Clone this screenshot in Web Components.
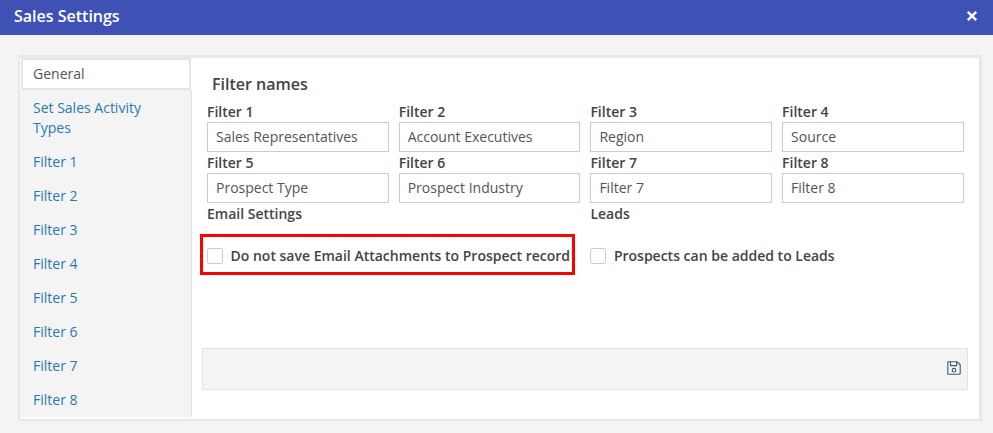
<!DOCTYPE html>
<html lang="en"><head><meta charset="utf-8"><title>Sales Settings</title>
<style>
html,body{margin:0;padding:0;background:#f4f4f4;height:100%;overflow:hidden}
body{font-family:"Open Sans",sans-serif;font-size:14px;color:#444}
</style></head><body>
<sales-dialog></sales-dialog>
<template id="t-dialog"><style>
:host{display:block;width:993px;height:433px;background:#f4f4f4}
header{height:35px;background:#3f51b5;color:#fff;display:flex;align-items:center;justify-content:space-between;padding:0 15px 0 14px;box-sizing:border-box}
h1{margin:0;font-size:16px;font-weight:600;line-height:35px;position:relative;top:-1px}
svg{display:block;position:relative;top:-2px}
.frame{margin:20px 11px 0 18px;height:366px;box-sizing:border-box;border:solid #e8e8e8;border-width:3px 3px 2px 2px;background:#fff;padding-bottom:2px;display:flex}
side-nav{flex:none}
settings-panel{flex:1;min-width:0}
</style>
<header><h1>Sales Settings</h1><svg width="12" height="12" viewBox="0 0 12 12" aria-label="Close"><path d="M1.8 1.8 10.2 10.2M10.2 1.8 1.8 10.2" stroke="#fff" stroke-width="2.4"/></svg></header>
<div class="frame"><side-nav></side-nav><settings-panel></settings-panel></div>
</template>

<template id="t-nav"><style>
:host{display:flex;flex-direction:column;width:172px;box-sizing:border-box}
.tab{color:#555;background:#fff;border:2px solid #e5e5e5;height:32px;box-sizing:border-box;padding:3px 0 0 10px;line-height:22px;margin-left:1px;width:170px;flex:none}
ul{list-style:none;margin:0;padding:1px 0 0;flex:1;background:#f4f4f4;border-right:1px solid #e3e3e3}
li{padding:7px 13px;line-height:20px;color:#2a7ab0}
</style>
<div class="tab">General</div>
<ul><li>Set Sales Activity Types</li><li>Filter 1</li><li>Filter 2</li><li>Filter 3</li><li>Filter 4</li><li>Filter 5</li><li>Filter 6</li><li>Filter 7</li><li>Filter 8</li></ul>
</template>

<template id="t-panel"><style>
:host{display:flex;flex-direction:column;box-sizing:border-box;padding:0 15px;height:100%;color:#444}
h2{margin:0;padding:15px 0 0 5px;font-size:16px;font-weight:600;line-height:22px;color:#444}
.grid,.opts{display:grid;grid-template-columns:repeat(4,181.75px);column-gap:9.95px}
.grid{margin-top:7px}
.t{font-weight:600;font-size:14px;line-height:20px;height:20px;grid-column:span 2}
.box{grid-column:span 2;height:35px;box-sizing:border-box;padding-top:1px;margin-top:13px;display:flex;align-items:center;font-weight:600;white-space:nowrap}
.box.hl{outline:3px solid #f00;margin-left:-4px;padding-left:4px;width:369px}
.box i{width:16px;height:16px;flex:none;box-sizing:border-box;border:1px solid #ccc;border-radius:2px;background:#fff;margin:2px 7.5px 0 0}
.bar{margin:auto -4px 27px -5px;height:42px;box-sizing:border-box;background:#f4f4f4;border:1px solid #e3e3e3;display:flex;align-items:center;justify-content:flex-end;padding:0 6px 3px 0}
.bar svg{display:block}
</style>
<h2>Filter names</h2>
<div class="grid">
<filter-field label="Filter 1" value="Sales Representatives"></filter-field>
<filter-field label="Filter 2" value="Account Executives"></filter-field>
<filter-field label="Filter 3" value="Region"></filter-field>
<filter-field label="Filter 4" value="Source"></filter-field>
<filter-field label="Filter 5" value="Prospect Type"></filter-field>
<filter-field label="Filter 6" value="Prospect Industry"></filter-field>
<filter-field label="Filter 7" value="Filter 7"></filter-field>
<filter-field label="Filter 8" value="Filter 8"></filter-field>
</div>
<div class="opts">
<div class="t">Email Settings</div><div class="t">Leads</div>
<div class="box hl"><i></i>Do not save Email Attachments to Prospect record</div>
<div class="box"><i></i>Prospects can be added to Leads</div>
</div>
<div class="bar"><svg width="14" height="14" viewBox="0 0 14 14" aria-label="Save" fill="none"><path d="M1.5.8H10.2L13.2 3.8V12.5a.7.7 0 0 1-.7.7H1.5a.7.7 0 0 1-.7-.7V1.5a.7.7 0 0 1 .7-.7Z" stroke="#3c5a72" stroke-width="1.1"/><path d="M3.5 1V4.6H9.6V1" stroke="#3c5a72" stroke-width="1.1"/><circle cx="7" cy="9.2" r="1.8" stroke="#3c5a72" stroke-width="1.1"/></svg></div>
</template>

<template id="t-field"><style>
:host{display:block;height:51px}
label{display:block;font-weight:600;line-height:20px;height:20px;color:#444}
input{display:block;width:100%;height:30px;box-sizing:border-box;border:1px solid #ccc;background:#fff;padding:0 8px 2px;margin:0;font:400 14px "Open Sans",sans-serif;color:#555;outline:none;border-radius:0}
</style><label></label><input type="text">
</template>

<script>
function def(name,id,init){customElements.define(name,class extends HTMLElement{constructor(){super();this.attachShadow({mode:"open"}).appendChild(document.getElementById(id).content.cloneNode(true));}connectedCallback(){init&&init(this)}})}
def("filter-field","t-field",e=>{const r=e.shadowRoot;r.querySelector("label").textContent=e.getAttribute("label");const i=r.querySelector("input");i.value=e.getAttribute("value");i.setAttribute("value",e.getAttribute("value"));i.setAttribute("aria-label",e.getAttribute("label"))});
def("settings-panel","t-panel");
def("side-nav","t-nav");
def("sales-dialog","t-dialog");
</script>
</body></html>
